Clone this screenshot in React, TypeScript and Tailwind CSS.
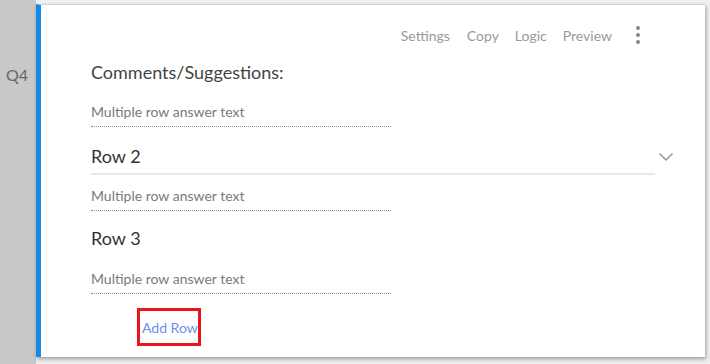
import React from 'react';

const font = { fontFamily: 'Lato, "Open Sans", sans-serif' };

const AnswerInput = () => (
  <div className="w-[300px] pb-[4px] border-b border-dotted border-[#8a8a8a] text-[14px] leading-[20px] text-[#7a7a7a]">
    Multiple row answer text
  </div>
);

export default function App() {
  return (
    <div className="w-[710px] h-[364px] flex bg-[#e4e4e4] overflow-hidden" style={font}>
      {/* question number column */}
      <div className="w-[36px] shrink-0 bg-[#c8c8c8] pt-[63px] pl-[6px]">
        <span className="text-[16px] leading-[22px] text-[#666]">Q4</span>
      </div>

      <div className="flex-1 flex flex-col bg-[#f0f0f0] pt-[4px]">
        <div className="h-[353px] mr-[5px] bg-white border-t border-[#d4d4d4] border-l-[5px] border-l-[#1589e8] shadow-[1px_2px_4px_rgba(0,0,0,0.35)] pt-[20px]">
          {/* toolbar */}
          <div className="flex items-center justify-end pr-[65px] h-[20px] text-[14px] text-[#9a9a9a]">
            <span>Settings</span>
            <span className="ml-[17px]">Copy</span>
            <span className="ml-[16px]">Logic</span>
            <span className="ml-[16px]">Preview</span>
            <div className="ml-[24px] flex flex-col gap-[3px]">
              <div className="w-[4px] h-[4px] rounded-full bg-[#888]" />
              <div className="w-[4px] h-[4px] rounded-full bg-[#888]" />
              <div className="w-[4px] h-[4px] rounded-full bg-[#888]" />
            </div>
          </div>

          <div className="pl-[50px] pr-[31px]">
            <div className="mt-[15px] text-[18px] leading-[24px] text-[#444]">Comments/Suggestions:</div>

            <div className="mt-[18px]">
              <AnswerInput />
            </div>

            <div className="mt-[17px] flex items-start">
              <div className="flex-1 pb-[5px] border-b-2 border-[#e8e8e8] text-[18px] leading-[24px] text-[#333]">
                Row 2
              </div>
              <svg width="16" height="10" viewBox="0 0 16 10" className="ml-[3px] mt-[8px]">
                <polyline points="1.5,1.5 8,8 14.5,1.5" fill="none" stroke="#8d98a8" strokeWidth="1.5" />
              </svg>
            </div>

            <div className="mt-[11px]">
              <AnswerInput />
            </div>

            <div className="mt-[15px] text-[18px] leading-[24px] text-[#333]">Row 3</div>

            <div className="mt-[19px]">
              <AnswerInput />
            </div>

            <div className="mt-[14px] ml-[46px] w-[64px] h-[38px] border-[3px] border-[#e8141e] flex items-center pl-[2px]">
              <span className="text-[14px] text-[#6a8ff0]">Add Row</span>
            </div>
          </div>
        </div>
      </div>
    </div>
  );
}
